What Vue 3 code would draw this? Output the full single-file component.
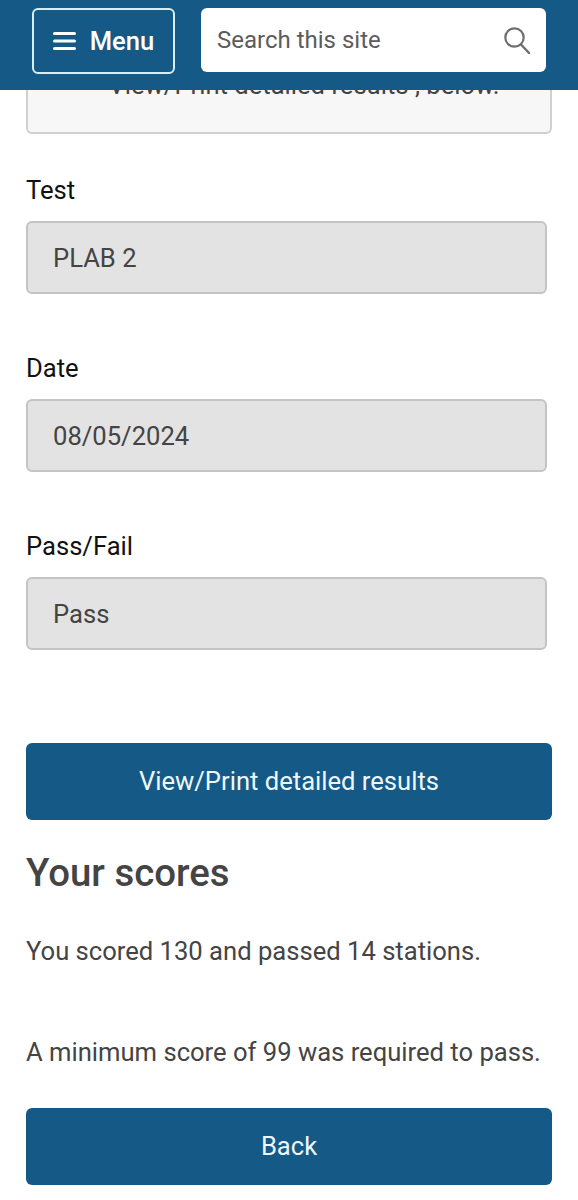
<script setup>
const fields = [
  { label: 'Test', value: 'PLAB 2' },
  { label: 'Date', value: '08/05/2024' },
  { label: 'Pass/Fail', value: 'Pass' },
]
</script>

<template>
  <div class="page">
    <header class="topbar">
      <button class="menu" type="button">
        <svg class="burger" width="23" height="20" viewBox="0 0 23 20" aria-hidden="true">
          <path d="M1.5 2.5h20M1.5 10h20M1.5 17.5h20" stroke="#fff" stroke-width="3" stroke-linecap="round" fill="none" />
        </svg>
        <span>Menu</span>
      </button>
      <div class="search">
        <span class="placeholder">Search this site</span>
        <svg width="28" height="28" viewBox="0 0 28 28" aria-hidden="true">
          <circle cx="11.5" cy="11.5" r="9.2" stroke="#6e6e6e" stroke-width="2.2" fill="none" />
          <path d="M18 18.5l8 8.5" stroke="#6e6e6e" stroke-width="2.4" stroke-linecap="round" fill="none" />
        </svg>
      </div>
    </header>

    <main class="content">
      <div class="notice">View/Print detailed results , below.</div>

      <div class="fields">
        <div v-for="f in fields" :key="f.label" class="field">
          <div class="label">{{ f.label }}</div>
          <div class="input">{{ f.value }}</div>
        </div>
      </div>

      <button class="btn detail" type="button">View/Print detailed results</button>

      <h2 class="title">Your scores</h2>
      <p class="score">You scored 130 and passed 14 stations.</p>
      <p class="minimum">A minimum score of 99 was required to pass.</p>

      <button class="btn back" type="button">Back</button>
    </main>
  </div>
</template>

<style>
html, body { margin: 0; background: #fff; }
</style>

<style scoped>
.page {
  width: 578px;
  height: 1200px;
  overflow: hidden;
  font-family: Roboto, "Liberation Sans", sans-serif;
  color: #444;
}
.topbar {
  position: relative;
  z-index: 2;
  height: 90px;
  box-sizing: border-box;
  background: #155987;
  padding: 8px 32px 0;
  display: flex;
  align-items: flex-start;
  gap: 26px;
}
.menu {
  width: 143px;
  height: 66px;
  box-sizing: border-box;
  background: #155987;
  border: 2px solid #d8eef7;
  border-radius: 6px;
  color: #fff;
  font: 500 25.6px Roboto, sans-serif;
  display: flex;
  align-items: center;
  justify-content: center;
  gap: 14px;
  padding: 0;
}
.search {
  flex: 1;
  height: 64px;
  box-sizing: border-box;
  background: #fff;
  border-radius: 6px;
  padding: 0 15px 0 16px;
  display: flex;
  align-items: center;
  justify-content: space-between;
  font-size: 24px;
  color: #5c5c5c;
}
.content {
  padding: 0 26px;
}
.notice {
  height: 62px;
  margin-top: -18px;
  box-sizing: border-box;
  background: #f7f7f7;
  border: 2px solid #d0d0d0;
  border-top: 0;
  border-radius: 0 0 6px 6px;
  font-size: 25.6px;
  text-align: center;
  color: #444;
  line-height: 26px;
  padding: 0 0 0 30px;
}
.fields {
  display: flex;
  flex-direction: column;
  gap: 60px;
  margin-top: 42px;
}
.label {
  font-size: 25.6px;
  line-height: 28px;
  color: #111;
  margin-bottom: 17px;
}
.input {
  width: 521px;
  height: 73px;
  box-sizing: border-box;
  background: #e3e3e3;
  border: 2px solid #c4c4c4;
  border-radius: 6px;
  padding: 0 25px;
  font-size: 25.6px;
  line-height: 71px;
  color: #444;
}
.btn {
  display: block;
  width: 526px;
  height: 77px;
  border: 0;
  border-radius: 6px;
  background: #155987;
  color: #eef8fc;
  font: 400 25.6px Roboto, sans-serif;
  padding: 0 0 2px;
}
.detail { margin-top: 93px; }
.title {
  margin: 30px 0 0;
  font-size: 38.4px;
  line-height: 46px;
  font-weight: 500;
  color: #444;
}
.score, .minimum {
  margin: 0;
  font-size: 25.6px;
  line-height: 30px;
  color: #444;
  white-space: nowrap;
}
.score { margin-top: 40px; }
.minimum { margin-top: 71px; }
.back { margin-top: 41px; }
</style>
